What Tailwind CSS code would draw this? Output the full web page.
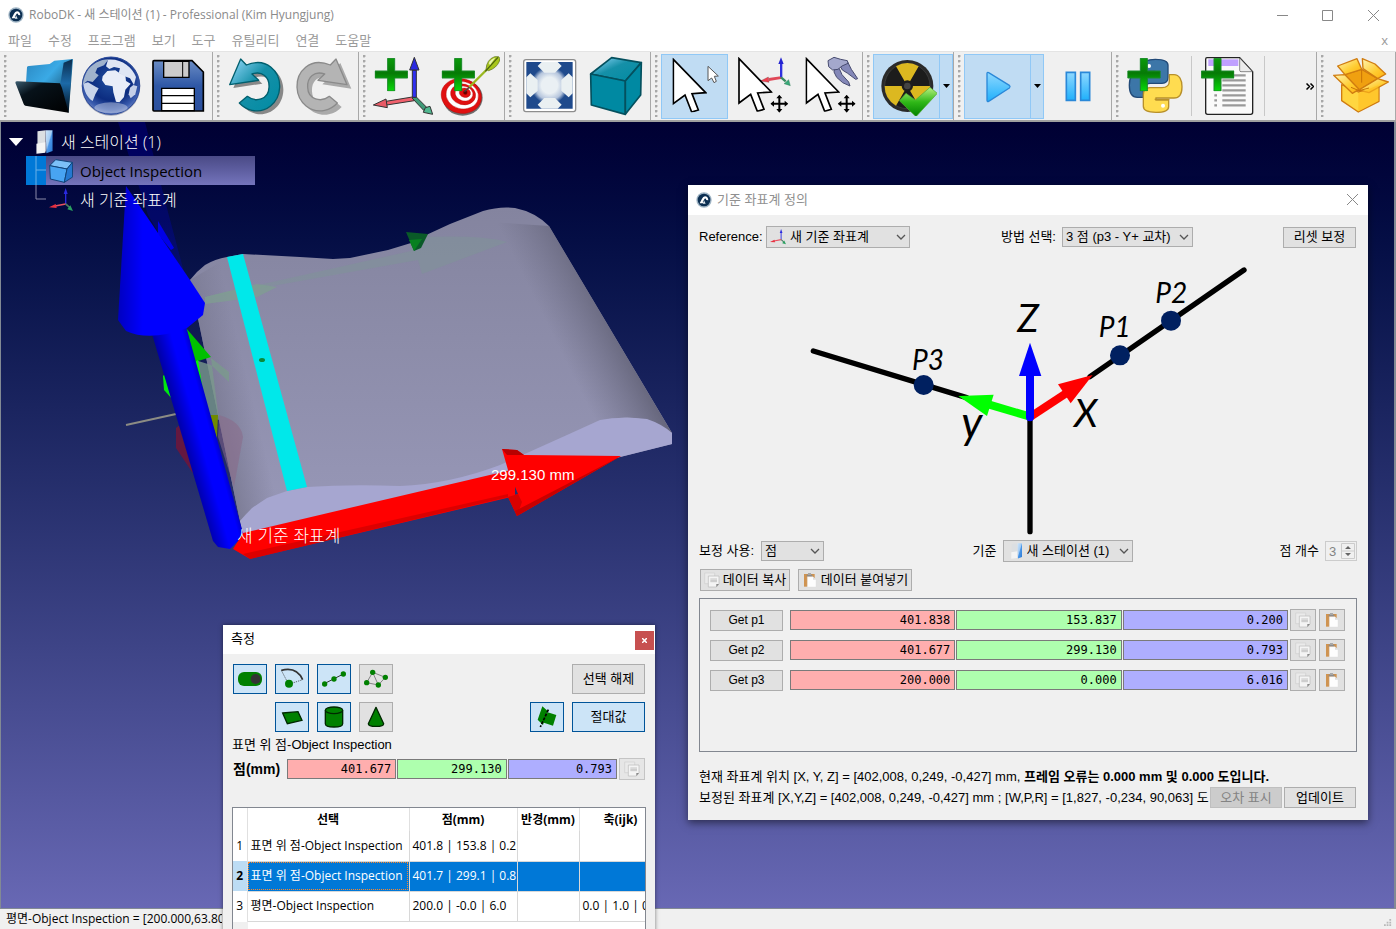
<!DOCTYPE html>
<html lang="ko">
<head>
    <meta charset="UTF-8">
    <meta name="viewport" content="width=device-width, initial-scale=1.0">
    <title>RoboDK</title>
    <script src="https://cdn.jsdelivr.net/npm/@tailwindcss/browser@4"></script>
    <style>
        body { font-family: "Open Sans", "Noto Sans CJK KR", sans-serif; }
        .gulim { font-family: "Liberation Sans", "Noto Sans CJK KR", sans-serif; }
        .mono { font-family: "DejaVu Sans Mono", monospace; }
        .grip { background: radial-gradient(circle at 1px 1px, #a8a8a8 1px, transparent 2px) 0 0 / 4px 5px; }
    </style>
</head>
<body class="h-screen overflow-hidden bg-[#f0f0f0] text-xs text-black">

<!-- shared symbols -->
<svg class="absolute size-0" aria-hidden="true">
    <defs>
        <linearGradient id="gPlus" x1="0" y1="0" x2="0" y2="1"><stop offset="0" stop-color="#0a9a0a"/><stop offset=".45" stop-color="#067a06"/><stop offset="1" stop-color="#08d808"/></linearGradient>
        <linearGradient id="gTeal" x1="0" y1="0" x2="1" y2="1"><stop offset="0" stop-color="#9adcff"/><stop offset=".45" stop-color="#1590a8"/><stop offset="1" stop-color="#008ba3"/></linearGradient>
        <linearGradient id="gBlue" x1="0" y1="0" x2="0" y2="1"><stop offset="0" stop-color="#8fd8ff"/><stop offset="1" stop-color="#1fb0fb"/></linearGradient>
        <linearGradient id="gDoor" x1="0" y1="0" x2="1" y2="1"><stop offset="0" stop-color="#d0e6fa"/><stop offset=".45" stop-color="#a4ccf4"/><stop offset=".55" stop-color="#4a96e8"/><stop offset="1" stop-color="#2a78d4"/></linearGradient>
    </defs>
    <symbol id="logo" viewBox="0 0 48 48">
        <circle cx="24" cy="24" r="23" fill="#9fb4c4"/><circle cx="24" cy="24" r="19" fill="#0c2f52"/>
        <path d="M11 34l7-14q3-6 9-7 9 0 10 12l-6-1q-1-5-5-4l-6 10 5 4z" fill="#fff"/><path d="M24 25l5 10h-8z" fill="#dfe8ee"/>
    </symbol>
    <symbol id="axes" viewBox="0 0 72 72">
        <path d="M50 48V14" stroke="#2a2ae0" stroke-width="4"/><path d="M50 0l6 18H44z" fill="#2a2ae0"/>
        <path d="M50 48L18 54" stroke="#e85060" stroke-width="5"/><path d="M0 58l20-10 3 12z" fill="#e83040"/>
        <path d="M50 48l12 10" stroke="#4a7a60" stroke-width="5"/><path d="M72 69l-17-5 9-12z" fill="#2aa060"/>
    </symbol>
    <symbol id="station" viewBox="0 0 50 70">
        <path d="M3 4l24-3v62L3 60z" fill="#dcdfe2"/><path d="M27 1h20v60l-18 7z" fill="url(#gDoor)"/><path d="M0 40l26-4v30l-26 3z" fill="#f4f4f4"/>
    </symbol>
    <symbol id="plus" viewBox="0 0 100 100"><path d="M39 1h21v38h39v21H60v39H39V60H1V39h38z" fill="url(#gPlus)" stroke="#1a8a2a" stroke-width="3"/></symbol>
    <symbol id="cursor" viewBox="0 0 104 164"><path d="M3 5l97 100-41 3 19 49-20 6-20-51-35 26z" fill="#fff" stroke="#000" stroke-width="5"/></symbol>
    <symbol id="move" viewBox="0 0 54 54"><path d="M27 0l9 11h-6v13h13v-6l11 9-11 9v-6H30v13h6l-9 11-9-11h6V30H11v6L0 27l11-9v6h13V11h-6z"/></symbol>
    <symbol id="copy" viewBox="0 0 48 48">
        <path d="M2 3h30v32H2z" fill="#eaeaea" stroke="#cfcfcf" stroke-width="2"/>
        <path d="M13 12h32v24l-8 9H13z" fill="#f4f4f4" stroke="#bababa" stroke-width="2"/>
        <path d="M19 21h20M19 25h20M19 29h20" stroke="#c6c6c6" stroke-width="3"/><path d="M45 36l-8 9v-9z" fill="#888"/>
    </symbol>
    <symbol id="paste" viewBox="0 0 48 48">
        <path d="M6 6h32v38H6z" fill="#cf9350"/><path d="M14 8h17v6H14z" fill="#8b8b8b"/><path d="M18 3h9v6h-9z" fill="#a8a8a8"/>
        <path d="M16 14h17l9 9v22H16z" fill="#fdfdfd" stroke="#ddd"/><path d="M33 14l9 9h-9z" fill="#ddd"/>
    </symbol>
    <symbol id="chev" viewBox="0 0 10 6"><path d="M1 1l4 4 4-4" fill="none" stroke="#555" stroke-width="1.3"/></symbol>
</svg>

<div class="flex h-screen flex-col">
    <header class="bg-white text-[#8a8a8a]">
        <div class="flex h-[30px] items-center pl-2">
            <svg class="size-4"><use href="#logo"/></svg>
            <h1 class="ml-[5px] flex-1">RoboDK - 새 스테이션 (1) - Professional (Kim Hyungjung)</h1>
            <button class="grid h-full w-[46px] place-items-center" aria-label="최소화"><svg class="size-[11px]" viewBox="0 0 11 11"><path d="M0 5.500h11" stroke="#888"/></svg></button>
            <button class="grid h-full w-[45px] place-items-center" aria-label="최대화"><svg class="size-[11px]" viewBox="0 0 11 11"><path d="M.5.5h10v10H.5z" fill="none" stroke="#888"/></svg></button>
            <button class="grid h-full w-[46px] place-items-center" aria-label="닫기"><svg class="size-[11px]" viewBox="0 0 11 11"><path d="M0 0l11 11M11 0L0 11" stroke="#888"/></svg></button>
        </div>
        <nav class="flex h-[21px] items-center gap-4 pr-2 pl-2 text-[13px] text-[#9a9a9a]">
            <a href="#">파일</a><a href="#">수정</a><a href="#">프로그램</a><a href="#">보기</a><a href="#">도구</a><a href="#">유틸리티</a><a href="#">연결</a><a href="#">도움말</a>
            <a href="#" class="ml-auto">x</a>
        </nav>
    </header>

    <!-- toolbar -->
    <div class="flex h-[71px] border-t border-b-2 border-t-[#e4e4e4] border-b-[#a0a0a0]" role="toolbar">
        <div class="flex items-center border-r border-[#a8a8a8] pr-px">
            <span class="grip ml-[4px] mr-[2px] h-[62px] w-1"></span>
            <button class="grid h-[65px] w-[67px] place-items-center" aria-label="열기">
                <svg class="size-[60px]" viewBox="39 168 180 180">
                    <defs><linearGradient id="gF" x1="0" y1="0" x2="1" y2="1"><stop offset="0" stop-color="#2a86c0"/><stop offset=".4" stop-color="#3aaae6"/><stop offset="1" stop-color="#021626"/></linearGradient>
                    <linearGradient id="gF2" x1="0" y1="0" x2="1" y2="1"><stop offset="0" stop-color="#3a5c70"/><stop offset=".3" stop-color="#07121a"/><stop offset="1" stop-color="#000"/></linearGradient>
                    <linearGradient id="gF3" x1="0" y1="0" x2="0" y2="1"><stop offset="0" stop-color="#0a2c4c"/><stop offset=".45" stop-color="#1c6aa8"/><stop offset="1" stop-color="#010a14"/></linearGradient></defs>
                    <path d="M78 202q1-4 6-4l62-6 14-10 56-5-13 161-130-60z" fill="url(#gF)"/>
                    <path d="M214 178l-12 160-24-86 10-64z" fill="url(#gF3)"/>
                    <path d="M43 248q0-4 6-4l128 6 6 14 20 74-130-21q-4-1-5-5z" fill="url(#gF2)"/>
                </svg>
            </button>
            <button class="grid h-[65px] w-[67px] place-items-center" aria-label="온라인 라이브러리">
                <svg class="size-[60px]" viewBox="241 167 180 180">
                    <defs><radialGradient id="gG" cx=".5" cy=".4" r=".65"><stop offset="0" stop-color="#2050a0"/><stop offset=".55" stop-color="#0c2c80"/><stop offset=".8" stop-color="#3a5cae"/><stop offset="1" stop-color="#8a9cd0"/></radialGradient></defs>
                    <circle cx="331" cy="258" r="88" fill="#9aa0b4"/><circle cx="331" cy="256" r="86" fill="url(#gG)" stroke="#2a4a9c" stroke-width="3"/>
                    <path d="M258 215c14-24 40-38 66-38l-14 18-20 8-6 14 10 8-18 20-16-4-14 12c2-14 6-26 12-38z" fill="#9fb2cc"/>
                    <path d="M248 250l14-4 24 14 8 4-10 18-8 20c-16-10-26-30-28-52z" fill="#c8d4ea"/>
                    <path d="M306 228l14-16 24-2 16 10 14 4 2 18 14 8-16 18-4 22-14 16-10-2-8-28-2-18-22-4-10-14z" fill="#e8edf8"/>
                    <path d="M322 178c40-4 72 22 84 52l-6 24-12-20-16-6-18-10 4-14-18-4-14 6-10-8z" fill="#dfe6f4"/>
                    <path d="M388 262l10-8 12 4-6 24-14 12-6-12z" fill="#c4cfe8"/><ellipse cx="331" cy="322" rx="50" ry="16" fill="#fff" opacity=".35"/>
                </svg>
            </button>
            <button class="grid h-[65px] w-[67px] place-items-center" aria-label="저장">
                <svg class="size-[60px]" viewBox="441 168 180 180">
                    <defs><linearGradient id="gS" x1="0" y1="0" x2="0" y2="1"><stop offset="0" stop-color="#6a8cc4"/><stop offset=".5" stop-color="#2f58a6"/><stop offset="1" stop-color="#2b4f9c"/></linearGradient></defs>
                    <path d="M459 182h114l34 34v117H459q-3 0-3-3V185q0-3 3-3z" fill="url(#gS)" stroke="#000" stroke-width="5"/>
                    <path d="M488 184h76v48h-76z" fill="#ccc" stroke="#000" stroke-width="4"/><path d="M545 186v45" stroke="#000" stroke-width="3"/>
                    <path d="M482 265h98v67h-98z" fill="#fff" stroke="#000" stroke-width="4"/><path d="M482 287h98M482 310h98" stroke="#000" stroke-width="4"/>
                </svg>
            </button>
        </div>
        <div class="flex items-center border-r border-[#a8a8a8] pr-px">
            <span class="grip ml-[4px] mr-[2px] h-[62px] w-1"></span>
            <button class="grid h-[65px] w-[67px] place-items-center" aria-label="실행 취소">
                <svg class="size-[60px]" viewBox="680 168 180 180">
                    <path d="M738 195C800 170 840 215 838 262C836 310 795 340 755 331C740 328 727 320 717 309L741 289C765 308 805 300 806 262C808 230 785 212 755 222L775 241L688 254L721 177Z" fill="#888" transform="translate(11 10)"/>
                    <path d="M738 195C800 170 840 215 838 262C836 310 795 340 755 331C740 328 727 320 717 309L741 289C765 308 805 300 806 262C808 230 785 212 755 222L775 241L688 254L721 177Z" fill="url(#gTeal)" stroke="#005f6e" stroke-width="4" stroke-linejoin="round"/>
                </svg>
            </button>
            <button class="grid h-[65px] w-[67px] place-items-center" aria-label="다시 실행">
                <svg class="size-[60px]" viewBox="879 168 180 180">
                    <path d="M988 195C926 170 886 215 888 262C890 310 931 340 971 331C986 328 999 320 1009 309L985 289C961 308 921 300 920 262C918 230 941 212 971 222L951 241L1038 254L1005 177Z" fill="#aaa" transform="translate(13 12)"/>
                    <path d="M988 195C926 170 886 215 888 262C890 310 931 340 971 331C986 328 999 320 1009 309L985 289C961 308 921 300 920 262C918 230 941 212 971 222L951 241L1038 254L1005 177Z" fill="#b4b4b4" stroke="#8a8a8a" stroke-width="4" stroke-linejoin="round"/>
                </svg>
            </button>
        </div>
        <div class="flex items-center border-r border-[#a8a8a8] pr-px">
            <span class="grip ml-[4px] mr-[2px] h-[62px] w-1"></span>
            <button class="grid h-[65px] w-[67px] place-items-center" aria-label="기준 좌표계 추가">
                <svg class="size-[60px]" viewBox="51 18 180 180">
                    <path d="M90 154l85-14v12l-83 13z" fill="#f0606c" stroke="#333" stroke-width="3"/><path d="M52 165l38-18 4 26z" fill="#e85a66" stroke="#333" stroke-width="3"/>
                    <path d="M168 144l12-4 34 34-10 8z" fill="#3f9a78" stroke="#333" stroke-width="3"/><path d="M230 193l-28-6 6-14 14-4z" fill="#50b890" stroke="#333" stroke-width="3"/>
                    <path d="M169 60h12v82h-12z" fill="#3030f0" stroke="#333" stroke-width="3"/><path d="M175 22l14 38h-28z" fill="#2a2ae0" stroke="#333" stroke-width="3"/>
                    <use href="#plus" x="56" y="24" width="100" height="100"/>
                </svg>
            </button>
            <button class="grid h-[65px] w-[67px] place-items-center" aria-label="타겟 추가">
                <svg class="size-[60px]" viewBox="252 18 180 180">
                    <ellipse cx="320" cy="143" rx="60" ry="54" fill="#6e6e6e"/>
                    <g transform="rotate(14 316 138)" stroke="#a00" stroke-width="1"><ellipse cx="316" cy="138" rx="61" ry="52" fill="#e01010"/><ellipse cx="318" cy="135" rx="49" ry="41" fill="#fff"/><ellipse cx="320" cy="132" rx="38" ry="31" fill="#e01010"/><ellipse cx="322" cy="129" rx="27" ry="22" fill="#fff"/><ellipse cx="324" cy="126" rx="17" ry="14" fill="#e01010"/><circle cx="325" cy="125" r="6" fill="#600"/></g>
                    <path d="M325 125l20-18" stroke="#444" stroke-width="4"/><path d="M340 111l60-60" stroke="#9ab820" stroke-width="7"/>
                    <path d="M390 58q2-30 26-38l12 0q6 4 2 14-8 20-32 28z" fill="#a8c61c" stroke="#566a10" stroke-width="2"/><path d="M388 64l38-42" stroke="#4a6010" stroke-width="4"/><path d="M398 40q6-14 20-17l-16 22z" fill="#e8f4b0"/>
                    <use href="#plus" x="257" y="24" width="100" height="100"/>
                </svg>
            </button>
        </div>
        <div class="flex items-center border-r border-[#a8a8a8] pr-px">
            <span class="grip ml-[4px] mr-[2px] h-[62px] w-1"></span>
            <button class="grid h-[65px] w-[67px] place-items-center" aria-label="전체 맞춤">
                <svg class="size-[60px]" viewBox="489 18 180 180">
                    <defs><radialGradient id="gC"><stop offset=".35" stop-color="#eaf0f4"/><stop offset=".62" stop-color="#b4c4dc"/><stop offset=".8" stop-color="#1f4a8c"/></radialGradient></defs>
                    <rect x="503" y="29" width="156" height="156" rx="7" fill="#fff" stroke="#8e8e8e" stroke-width="4"/><path d="M511 36h139v140H511z" fill="url(#gC)"/>
                    <path d="M545 48l12-12h48l12 12-20 20h-32zM545 164l12 12h48l12-12-20-20h-32zM523 70l-12 12v48l12 12 22-20V90zM638 70l12 12v48l-12 12-22-20V90z" fill="#eaf0f2"/>
                </svg>
            </button>
            <button class="grid h-[65px] w-[67px] place-items-center" aria-label="등각 보기">
                <svg class="size-[60px]" viewBox="689 18 180 180">
                    <g stroke="#04505e" stroke-width="5" stroke-linejoin="round"><path d="M766 23l89 15-48 55-104-21z" fill="url(#gTeal)"/><path d="M703 72l104 21v100l-102-28z" fill="#0089a2"/><path d="M807 93l48-55-2 97-46 58z" fill="#0089a2"/></g>
                </svg>
            </button>
        </div>
        <div class="flex items-center border-r border-[#a8a8a8]">
            <span class="grip ml-[4px] mr-[2px] h-[62px] w-1"></span>
            <button class="grid h-[65px] w-[67px] place-items-center border border-[#90c8f6] bg-[#c0dcf3]" aria-label="선택">
                <svg class="size-[60px]" viewBox="43 18 180 180"><use href="#cursor" x="65" y="23" width="104" height="164"/><path d="M172 49l31 29-12 1 6 15-7 4-7-14-11 8z" fill="#fff" stroke="#555" stroke-width="3"/></svg>
            </button>
            <button class="grid h-[65px] w-[67px] place-items-center" aria-label="좌표계 이동">
                <svg class="size-[60px]" viewBox="245 18 180 180">
                    <path d="M355 84l37-5v8l-36 6z" fill="#e04858"/><path d="M330 93l24-12 2 16z" fill="#f04050" stroke="#633"/><path d="M389 40h7v42h-7z" fill="#3030e0"/><path d="M392 22l8 20h-16z" fill="#2424d0"/><path d="M392 82l14 12" stroke="#3a8a60" stroke-width="7"/><path d="M420 107l-19-6 14-12z" fill="#38a878" stroke="#264"/>
                    <use href="#cursor" x="263" y="21" width="104" height="164"/><use href="#move" x="360" y="134" width="54" height="54"/>
                </svg>
            </button>
            <button class="grid h-[65px] w-[67px] place-items-center" aria-label="TCP 이동">
                <svg class="size-[60px]" viewBox="445 18 180 180">
                    <g fill="#8488b8" stroke="#484c70" stroke-width="3" stroke-linejoin="round"><path d="M552 54l14 2 8 18 20 22 4 12-22-10-18-16-8-16z"/><path d="M572 38l18-4 12 24 19 28-6 2-24-18-16-10-8-14z"/><path d="M532 32l18-10 20 6 20 4 2 8-18 8-12 10-16 2-12-10z" fill="#a4a8cc"/></g>
                    <use href="#cursor" x="464" y="21" width="104" height="164"/><use href="#move" x="561" y="134" width="54" height="54"/>
                </svg>
            </button>
        </div>
        <div class="flex items-center border-r border-[#a8a8a8]">
            <span class="grip ml-[4px] mr-[2px] h-[62px] w-1"></span>
            <button class="grid h-[65px] w-[67px] place-items-center border border-[#90c8f6] bg-[#c0dcf3]" aria-label="충돌 확인">
                <svg class="size-[60px]" viewBox="681 18 180 180">
                    <defs><linearGradient id="gK" x1="0" y1="0" x2="0" y2="1"><stop offset="0" stop-color="#b8f080"/><stop offset=".5" stop-color="#30b818"/><stop offset="1" stop-color="#008000"/></linearGradient></defs>
                    <circle cx="772" cy="108" r="78" fill="#2a2a2a"/><circle cx="772" cy="108" r="68" fill="#1c1c1c" stroke="#444" stroke-width="2"/>
                    <path d="M772 108L738 49a68 68 0 0 1 68 0zM772 108h68a68 68 0 0 1-34 59zM772 108h-68a68 68 0 0 0 34 59z" fill="#dcb820"/>
                    <circle cx="772" cy="108" r="17" fill="#1e1e1e"/><circle cx="772" cy="108" r="10" fill="#444"/>
                    <path d="M748 152l20-22 28 20 44-38 22 18-64 70z" fill="url(#gK)" stroke="#50a830" stroke-width="2"/>
                </svg>
            </button>
            <button class="grid h-[65px] w-[13px] place-items-center border border-l-0 border-[#90c8f6] bg-[#c0dcf3]" aria-label="충돌 옵션"><svg class="h-1 w-[7px]" viewBox="0 0 7 4"><path d="M0 0h7L3.500 4z"/></svg></button>
        </div>
        <div class="flex items-center border-r border-[#a8a8a8]">
            <span class="grip ml-[4px] mr-[2px] h-[62px] w-1"></span>
            <button class="grid h-[65px] w-[67px] place-items-center border border-[#90c8f6] bg-[#c0dcf3]" aria-label="재생">
                <svg class="size-[60px]" viewBox="956 18 180 180"><path d="M1013 70q0-4 5-2l62 38q4 4 0 8l-62 40q-5 2-5-3z" fill="url(#gBlue)" stroke="#2a88d8" stroke-width="4"/></svg>
            </button>
            <button class="grid h-[65px] w-[13px] place-items-center border border-l-0 border-[#90c8f6] bg-[#c0dcf3]" aria-label="재생 옵션"><svg class="h-1 w-[7px]" viewBox="0 0 7 4"><path d="M0 0h7L3.500 4z"/></svg></button>
            <button class="grid h-[65px] w-[67px] place-items-center" aria-label="일시 정지">
                <svg class="size-[60px]" viewBox="21 18 180 180"><path d="M76 67h27v84H76zM119 67h27v84h-27z" fill="url(#gBlue)" stroke="#2a88d8" stroke-width="5"/></svg>
            </button>
        </div>
        <div class="flex flex-1 items-center border-r border-[#a8a8a8]">
            <span class="grip ml-[4px] mr-[2px] h-[62px] w-1"></span>
            <button class="grid h-[65px] w-[67px] place-items-center" aria-label="Python 프로그램 추가">
                <svg class="size-[60px]" viewBox="258 18 180 180">
                    <path d="M346 28c28 0 38 6 38 18v36c0 12-6 18-18 18h-36c-12 0-20 8-20 20v22h-18c-16 0-24-14-24-36s8-36 24-36h52v-6h-34V48c0-14 10-20 36-20z" fill="#3c76a8" stroke="#224a78" stroke-width="4"/><circle cx="327" cy="48" r="6" fill="#fff"/>
                    <path d="M388 74h14c16 0 24 16 24 36s-8 34-24 34h-54v6h38v20c0 10-12 17-38 17s-38-7-38-18v-34c0-14 8-22 20-22h36c14 0 22-8 22-20z" fill="#ffdc50" stroke="#b8902a" stroke-width="4"/><path d="M344 148h44" stroke="#b8902a" stroke-width="4"/><circle cx="369" cy="167" r="6" fill="#fff"/>
                    <use href="#plus" x="262" y="24" width="100" height="100"/>
                </svg>
            </button>
            <span class="mr-[3px] ml-[2px] h-[60px] w-px bg-[#c8c8c8]"></span>
            <button class="grid h-[65px] w-[67px] place-items-center" aria-label="프로그램 추가">
                <svg class="size-[60px]" viewBox="476 18 180 180">
                    <path d="M500 23h98l39 42v122q0 6-6 6H502q-6 0-6-6V28q0-5 4-5z" fill="#fafafa" stroke="#222" stroke-width="4"/><path d="M598 24l38 41h-34q-4 0-4-4z" fill="#ececec" stroke="#555" stroke-width="2"/><path d="M504 28h90v20h-90z" fill="#c0a0ff"/>
                    <path d="M546 76h70M546 91h70M546 106h70M546 121h70M546 136h70M546 151h70M546 166h70" stroke="#999" stroke-width="7"/><path d="M522 136h8M522 151h8M522 166h8" stroke="#999" stroke-width="7"/>
                    <use href="#plus" x="482" y="24" width="100" height="100"/>
                </svg>
            </button>
            <span class="mr-[3px] ml-[2px] h-[60px] w-px bg-[#c8c8c8]"></span>
            <button class="ml-auto grid h-[65px] w-3 place-items-center" aria-label="더 보기"><svg class="h-[7px] w-2" viewBox="0 0 8 7"><path d="M.5.5l3 3-3 3M4.500.5l3 3-3 3" fill="none" stroke="#000" stroke-width="1.500"/></svg></button>
        </div>
        <div class="flex items-center border-r border-[#a8a8a8] pr-px">
            <span class="grip ml-[4px] mr-[2px] h-[62px] w-1"></span>
            <button class="grid h-[65px] w-[67px] place-items-center" aria-label="패키지">
                <svg class="size-[60px]" viewBox="870 18 180 180">
                    <defs><linearGradient id="gX" x1="0" y1="0" x2="1" y2="1"><stop offset="0" stop-color="#fff4b0"/><stop offset=".6" stop-color="#ffcc30"/><stop offset="1" stop-color="#ffae10"/></linearGradient></defs>
                    <g stroke="#d07c10" stroke-width="4" stroke-linejoin="round"><path d="M902 104l50 22 62-22v50l-62 32-50-34z" fill="#ffd640"/><path d="M910 74l52-16 48 28-56 34z" fill="#f0a010"/><path d="M890 48l58-22 14 32-50 16z" fill="url(#gX)"/><path d="M966 56l-2-30 38 16 32 30-24 14z" fill="url(#gX)"/><path d="M878 76l34-2 42 44-20 12z" fill="url(#gX)"/><path d="M954 120l56-34 32 10-58 32z" fill="url(#gX)"/></g>
                    <path d="M962 60v38M930 112l24 10 30-8" stroke="#c87408" stroke-width="3" fill="none"/><path d="M952 130l60-24v47l-60 31z" fill="#ffbc20" opacity=".6"/>
                </svg>
            </button>
        </div>
    </div>

    <!-- 3D view -->
    <main class="relative min-h-0 flex-1 border-r-2 border-l border-[#828a94] bg-linear-to-b from-[#000033] to-[#6868b4] text-white">
        <svg class="absolute top-0 left-0 h-[470px] w-[700px]" viewBox="1 122 700 470">
            <defs>
                <linearGradient id="gBody" x1="0" y1="0" x2="0" y2="1"><stop offset="0" stop-color="#84849f"/><stop offset="1" stop-color="#9898b8"/></linearGradient>
                <linearGradient id="gEdge" gradientUnits="userSpaceOnUse" x1="560" y1="350" x2="616" y2="322"><stop offset="0" stop-color="#707088" stop-opacity="0"/><stop offset="1" stop-color="#66667c"/></linearGradient>
                <linearGradient id="gShaft" gradientUnits="userSpaceOnUse" x1="180" y1="436" x2="216" y2="426"><stop offset="0" stop-color="#0000a0"/><stop offset=".5" stop-color="#0000ff"/><stop offset=".8" stop-color="#0000ff"/><stop offset="1" stop-color="#0000b8"/></linearGradient>
                <linearGradient id="gCone" gradientUnits="userSpaceOnUse" x1="118" y1="290" x2="200" y2="290"><stop offset="0" stop-color="#0000c0"/><stop offset=".3" stop-color="#0000ff"/></linearGradient>
                <linearGradient id="gLeft" gradientUnits="userSpaceOnUse" x1="200" y1="400" x2="250" y2="388"><stop offset="0" stop-color="#77778f"/><stop offset="1" stop-color="#77778f" stop-opacity="0"/></linearGradient>
            </defs>
            <path d="M118 122h27l23 90 16 60-14-20-22-37z" fill="#0000ff" opacity=".2"/>
            <path d="M158 221l16 27-3 2-13-16z" fill="#0000e8"/>
            <path d="M126 425l50-11" stroke="#8c8c84" stroke-width="2"/>
            <path d="M176 428l10-8 14 60-8-8-16-24z" fill="#641840"/>
            <path d="M190 280Q197 271 205 265 215 259 227 257L243 254 263 255 300 257 333 259 350 258 388 250 411 243 424 236 450 224 483 211Q500 206 515 208 535 212 549 226L672 433V444L620 457 243 534 240 521z" fill="url(#gBody)"/>
            <path d="M490 222l59 4 123 207q-20-14-45-16-27 2-60 18z" fill="url(#gEdge)"/>
            <path d="M190 280l37-22 60 233q-30 8-47 30z" fill="url(#gLeft)"/>
            <path d="M205 297l206-46v-10l12-4q60-2 84 5l-85 32-4-14-213 38z" fill="#7a9c92" opacity=".35"/>
            <path d="M205 297l52-13 20 3-20 10-52 7z" fill="#7f9f90" opacity=".7"/>
            <path d="M406 232l22 2-7 14-7 3z" fill="#0a5a28"/><path d="M409 240l13-1-8 12z" fill="#088020"/>
            <path d="M195 360l16 5 18 17v-10l-18-14 8 62-12-4z" fill="#7a9a8c" opacity=".8"/>
            <path d="M186 328l25 29-16 5z" fill="#00c000"/><path d="M195 362l3-2 6 36z" fill="#00ff00"/><path d="M163 376l2-2 8 26-9-10z" fill="#00e810"/>
            <path d="M219 415q22 6 24 22l-9 50-16-50z" fill="#8a6a88" opacity=".55"/><path d="M209 415h9l-1 24z" fill="#6f8a00"/>
            <path d="M240 521L252 508 267 498 287 491 307 487Q350 484 400 486 450 484 500 465L567 435 600 420Q620 416 647 419 662 424 672 433V444L620 457 243 534z" fill="#a6a6d0"/>
            <path d="M227 257l16-3 64 233-20 4z" fill="#00e8ea"/><ellipse cx="262" cy="360" rx="3" ry="2" fill="#0a8a3a"/>
            <path d="M243 533L515 469V496L250 559 233 549z" fill="#f00"/><path d="M243 554l265-60v3L250 559z" fill="#c40000" opacity=".6"/>
            <path d="M502 449l15 1 7 5 97 1-104 60-9-19 10-3-10-24z" fill="#f00"/><path d="M508 497l10-3 4 8-5 14z" fill="#d80000"/><path d="M502 449l15 1 7 5-17 0z" fill="#b80000"/><path d="M621 456l-104 60-2-5z" fill="#c80000"/>
            <path d="M152 334l34-8 57 207-5 8-8 8-12-2-5-6z" fill="url(#gShaft)"/>
            <path d="M126 186L190 280 205 303 203 315 187 328Q150 342 126 331L118 320z" fill="url(#gCone)"/>
            <g fill="#fff" font-weight="300"><text x="237" y="542" font-size="17" font-family="'Noto Sans CJK KR', sans-serif">새 기준 좌표계</text><text x="491" y="480" font-size="15" font-family="'Liberation Sans', sans-serif">299.130 mm</text></g>
        </svg>

        <ul class="relative w-[254px] pt-[5px] text-[15px]">
            <li class="flex h-[29px] items-center pl-[7px]"><svg class="h-2 w-4" viewBox="0 0 16 9"><path d="M0 0h16L8 9z" fill="#fff"/></svg><svg class="ml-3 h-6 w-[18px]"><use href="#station"/></svg><span class="ml-[7px] text-base font-light">새 스테이션 (1)</span></li>
            <li class="flex h-[29px] items-center pl-[25px] text-black">
                <div class="flex h-full flex-1 items-center bg-linear-to-b from-[#4a4a86] to-[#7474bc]">
                    <svg class="h-full w-5 bg-[#0078d7]" viewBox="0 0 20 29"><path d="M10 0v29M10 14h10" stroke="#6ab0e8"/></svg>
                    <svg class="ml-[3px] size-6" viewBox="0 0 72 72"><g stroke="#12457a" stroke-width="3" stroke-linejoin="round"><path d="M20 2l50 8-16 20L2 20z" fill="#7cc0f8"/><path d="M2 20l52 10-8 40-42-10z" fill="#48a4f2"/><path d="M54 30l16-20 1 44-25 16z" fill="#2478d0"/></g></svg>
                    <span class="ml-[7px]">Object Inspection</span>
                </div>
            </li>
            <li class="flex h-[29px] items-center pl-[25px]"><svg class="h-full w-5" viewBox="0 0 20 29"><path d="M10 0v14h10" fill="none" stroke="#8a8aa8"/></svg><svg class="ml-[3px] size-6"><use href="#axes"/></svg><span class="ml-[7px] text-base font-light">새 기준 좌표계</span></li>
        </ul>

        <!-- reference frame dialog -->
        <section class="gulim absolute top-[63px] right-[26px] w-[680px] bg-[#f0f0f0] text-[13px] text-black shadow-[0_3px_8px_rgba(0,0,0,.5)]">
            <div class="flex h-[30px] items-center bg-white pr-[10px] pb-px pl-2 text-[#909090]">
                <svg class="size-4"><use href="#logo"/></svg><h2 class="ml-[5px] flex-1">기준 좌표계 정의</h2>
                <button aria-label="닫기"><svg class="size-[11px]" viewBox="0 0 11 11"><path d="M0 0l11 11M11 0L0 11" stroke="#888"/></svg></button>
            </div>
            <div class="px-[11px] pt-[11px] pb-3">
                <div class="flex h-[22px] items-center">
                    <label for="ref" class="w-[67px]">Reference:</label>
                    <div class="relative h-[22px] w-[144px]"><svg class="absolute top-[3px] left-1 size-4"><use href="#axes"/></svg>
                        <select id="ref" class="h-full w-full appearance-none border border-[#adadad] bg-[#d2d2d2]/50 pl-[23px]"><option>새 기준 좌표계</option></select><svg class="pointer-events-none absolute top-2 right-1 h-[6px] w-[10px]"><use href="#chev"/></svg></div>
                    <label for="method" class="ml-auto">방법 선택:</label>
                    <div class="relative ml-[6px] h-[20px] w-[131px]"><select id="method" class="h-full w-full appearance-none border border-[#adadad] bg-[#e1e1e1] pl-[3px]"><option>3 점 (p3 - Y+ 교차)</option></select><svg class="pointer-events-none absolute top-[7px] right-1 h-[6px] w-[10px]"><use href="#chev"/></svg></div>
                    <button class="mr-px ml-[90px] h-[21px] w-[73px] border border-[#adadad] bg-[#e1e1e1]">리셋 보정</button>
                </div>
                <svg class="mx-auto mt-[2px] h-[290px] w-[480px]" viewBox="-6 -15 1440 870">
                    <g stroke="#000" stroke-width="16" stroke-linecap="round"><path d="M70 288l460 140M900 365l462-320M720 490v340"/></g>
                    <path d="M720 485L598 449" stroke="#0f0" stroke-width="24"/><path d="M505 423l106-4-20 64z" fill="#0f0"/>
                    <path d="M722 485l106-70" stroke="#f00" stroke-width="24"/><path d="M908 360l-104 28 38 57z" fill="#f00"/>
                    <path d="M720 487V360" stroke="#00f" stroke-width="24" stroke-linecap="round"/><path d="M720 263l34 100h-67z" fill="#00f"/>
                    <g fill="#002060"><circle cx="1143" cy="197" r="30"/><circle cx="990" cy="301" r="30"/><circle cx="401" cy="390" r="30"/></g>
                    <g font-family="Lato, sans-serif" font-style="italic" font-size="84"><text x="1096" y="145">P2</text><text x="926" y="246">P1</text><text x="366" y="344">P3</text></g>
                    <g font-family="Lato, sans-serif" font-style="italic" font-size="116"><text x="682" y="232">Z</text><text x="852" y="516">X</text><text x="514" y="548" font-size="132">y</text></g>
                </svg>
                <div class="flex h-[22px] items-center">
                    <label for="use" class="w-[62px] whitespace-nowrap">보정 사용:</label>
                    <div class="relative h-[20px] w-[63px]"><select id="use" class="h-full w-full appearance-none border border-[#adadad] bg-[#e1e1e1] pl-[3px]"><option>점</option></select><svg class="pointer-events-none absolute top-[7px] right-1 h-[6px] w-[10px]"><use href="#chev"/></svg></div>
                    <label for="base" class="ml-auto">기준</label>
                    <div class="relative ml-[6px] h-[22px] w-[130px]"><svg class="absolute top-[3px] left-[8px] h-4 w-3"><use href="#station"/></svg>
                        <select id="base" class="h-full w-full appearance-none border border-[#adadad] bg-[#d2d2d2]/50 pl-[23px]"><option>새 스테이션 (1)</option></select><svg class="pointer-events-none absolute top-2 right-1 h-[6px] w-[10px]"><use href="#chev"/></svg></div>
                    <label for="cnt" class="ml-[147px]">점 개수</label>
                    <div class="relative ml-[6px] h-[20px] w-8"><input id="cnt" disabled value="3" class="h-full w-full border border-[#ccc] pl-[3px] text-[#838383]"><svg class="absolute top-[2px] right-[2px] h-4 w-[14px]" viewBox="0 0 14 16"><path d="M.5.5h13v15H.5zM0 8h14" fill="none" stroke="#ccc"/><path d="M4 6l3-3 3 3zM4 10l3 3 3-3z" fill="#666"/></svg></div>
                </div>
                <div class="mt-[7px] flex gap-2 pl-px">
                    <button class="flex h-[22px] w-[90px] items-center justify-center gap-[3px] border border-[#adadad] bg-[#e1e1e1] whitespace-nowrap"><svg class="size-4 shrink-0"><use href="#copy"/></svg>데이터 복사</button>
                    <button class="flex h-[22px] w-[114px] items-center justify-center gap-[3px] border border-[#adadad] bg-[#e1e1e1] whitespace-nowrap"><svg class="size-4 shrink-0"><use href="#paste"/></svg>데이터 붙여넣기</button>
                </div>
                <div class="mt-[7px] flex h-[154px] flex-col gap-2 border border-[#828790] py-[10px] pr-[11px] pl-[10px] text-xs">
                    <div class="flex items-center"><button class="mr-[7px] h-[21px] w-[73px] border border-[#adadad] bg-[#e1e1e1]">Get p1</button>
                        <div class="mono grid flex-1 grid-cols-3 gap-px"><input aria-label="p1 X" value="401.838" class="h-5 min-w-0 border border-[#7a7a7a] bg-[#ffaeae] pr-1 text-right"><input aria-label="p1 Y" value="153.837" class="h-5 min-w-0 border border-[#7a7a7a] bg-[#aeffae] pr-1 text-right"><input aria-label="p1 Z" value="0.200" class="h-5 min-w-0 border border-[#7a7a7a] bg-[#aeaeff] pr-1 text-right"></div>
                        <button aria-label="복사" class="ml-[2px] grid h-[22px] w-[26px] place-items-center border border-[#adadad] bg-[#e1e1e1]"><svg class="size-4"><use href="#copy"/></svg></button><button aria-label="붙여넣기" class="ml-[3px] grid h-[22px] w-[26px] place-items-center border border-[#adadad] bg-[#e1e1e1]"><svg class="size-4"><use href="#paste"/></svg></button></div>
                    <div class="flex items-center"><button class="mr-[7px] h-[21px] w-[73px] border border-[#adadad] bg-[#e1e1e1]">Get p2</button>
                        <div class="mono grid flex-1 grid-cols-3 gap-px"><input aria-label="p2 X" value="401.677" class="h-5 min-w-0 border border-[#7a7a7a] bg-[#ffaeae] pr-1 text-right"><input aria-label="p2 Y" value="299.130" class="h-5 min-w-0 border border-[#7a7a7a] bg-[#aeffae] pr-1 text-right"><input aria-label="p2 Z" value="0.793" class="h-5 min-w-0 border border-[#7a7a7a] bg-[#aeaeff] pr-1 text-right"></div>
                        <button aria-label="복사" class="ml-[2px] grid h-[22px] w-[26px] place-items-center border border-[#adadad] bg-[#e1e1e1]"><svg class="size-4"><use href="#copy"/></svg></button><button aria-label="붙여넣기" class="ml-[3px] grid h-[22px] w-[26px] place-items-center border border-[#adadad] bg-[#e1e1e1]"><svg class="size-4"><use href="#paste"/></svg></button></div>
                    <div class="flex items-center"><button class="mr-[7px] h-[21px] w-[73px] border border-[#adadad] bg-[#e1e1e1]">Get p3</button>
                        <div class="mono grid flex-1 grid-cols-3 gap-px"><input aria-label="p3 X" value="200.000" class="h-5 min-w-0 border border-[#7a7a7a] bg-[#ffaeae] pr-1 text-right"><input aria-label="p3 Y" value="0.000" class="h-5 min-w-0 border border-[#7a7a7a] bg-[#aeffae] pr-1 text-right"><input aria-label="p3 Z" value="6.016" class="h-5 min-w-0 border border-[#7a7a7a] bg-[#aeaeff] pr-1 text-right"></div>
                        <button aria-label="복사" class="ml-[2px] grid h-[22px] w-[26px] place-items-center border border-[#adadad] bg-[#e1e1e1]"><svg class="size-4"><use href="#copy"/></svg></button><button aria-label="붙여넣기" class="ml-[3px] grid h-[22px] w-[26px] place-items-center border border-[#adadad] bg-[#e1e1e1]"><svg class="size-4"><use href="#paste"/></svg></button></div>
                </div>
                <p class="mt-4 leading-[18px] whitespace-nowrap">현재 좌표계 위치 [X, Y, Z] = [402,008, 0,249, -0,427] mm, <b>프레임 오류는 0.000 mm 및 0.000 도입니다.</b></p>
                <div class="flex items-center gap-[2px] pt-px whitespace-nowrap"><p class="min-w-0 flex-1">보정된 좌표계 [X,Y,Z] = [402,008, 0,249, -0,427] mm ; [W,P,R] = [1,827, -0,234, 90,063] 도</p>
                    <button disabled class="h-[21px] w-[72px] border border-[#bfbfbf] bg-[#ccc] text-[#838383]">오차 표시</button><button class="mr-px h-[21px] w-[72px] border border-[#adadad] bg-[#e1e1e1]">업데이트</button></div>
            </div>
        </section>

        <!-- measure window -->
        <section class="gulim absolute top-[503px] left-[222px] z-10 w-[432px] bg-[#f0f0f0] text-[13px] text-black shadow-[0_0_4px_rgba(0,0,0,.5)]">
            <div class="flex h-[29px] items-center bg-white pr-px pl-2"><h2 class="flex-1 pb-[2px]">측정</h2><button aria-label="닫기" class="mt-[2px] grid size-[19px] place-items-center bg-[#c75050]"><svg class="size-[5px]" viewBox="0 0 5 5"><path d="M0 0l5 5M5 0L0 5" stroke="#fff" stroke-width="1.500"/></svg></button></div>
            <div class="px-[10px] pt-[10px]">
                <div class="grid grid-cols-[34px_34px_34px_34px_1fr_34px_73px] gap-2">
                    <button aria-label="측정 켜기" class="grid h-[30px] place-items-center border border-[#005499] bg-[#cce4f7]"><svg class="h-[14px] w-6" viewBox="0 0 72 42"><rect width="72" height="42" rx="18" fill="#008000"/><circle cx="53" cy="21" r="15" fill="#333"/></svg></button>
                    <button aria-label="반경" class="grid h-[30px] place-items-center border border-[#005499] bg-[#cce4f7]"><svg class="size-6" viewBox="0 0 72 72"><path d="M4 10Q50-2 68 38" fill="none" stroke="#333" stroke-width="5"/><path d="M4 10l22 42 42-14" fill="none" stroke="#222" stroke-width="2" stroke-dasharray="4 3"/><circle cx="27" cy="50" r="12" fill="#008000"/></svg></button>
                    <button aria-label="거리" class="grid h-[30px] place-items-center border border-[#005499] bg-[#cce4f7]"><svg class="size-6" viewBox="0 0 72 72"><path d="M7 50L64 21" stroke="#333" stroke-width="3"/><g fill="#008000"><circle cx="8" cy="51" r="8"/><circle cx="36" cy="36" r="8"/><circle cx="64" cy="21" r="8"/></g></svg></button>
                    <button aria-label="점군" class="grid h-[30px] place-items-center border border-[#adadad] bg-[#e1e1e1]"><svg class="size-6" viewBox="0 0 72 72"><path d="M8 47L26 16 64 31 43 54zM26 16l17 38" fill="none" stroke="#555" stroke-width="2"/><g fill="#008000"><circle cx="8" cy="47" r="8"/><circle cx="26" cy="16" r="8"/><circle cx="64" cy="31" r="8"/><circle cx="43" cy="54" r="8"/></g></svg></button>
                    <button class="col-start-7 h-[30px] border border-[#adadad] bg-[#e1e1e1]">선택 해제</button>
                    <button aria-label="평면" class="col-start-2 grid h-[30px] place-items-center border border-[#005499] bg-[#cce4f7]"><svg class="size-6" viewBox="0 0 72 72"><path d="M8 24l46-4 12 26-44 10z" fill="#008000" stroke="#002800" stroke-width="4"/></svg></button>
                    <button aria-label="원통" class="grid h-[30px] place-items-center border border-[#005499] bg-[#cce4f7]"><svg class="size-6" viewBox="0 0 72 72"><path d="M10 16v40q0 10 26 10t26-10V16" fill="#008000" stroke="#002800" stroke-width="4"/><ellipse cx="36" cy="16" rx="26" ry="10" fill="#008000" stroke="#002800" stroke-width="4"/></svg></button>
                    <button aria-label="원뿔" class="grid h-[30px] place-items-center border border-[#adadad] bg-[#e1e1e1]"><svg class="size-6" viewBox="0 0 72 72"><path d="M36 7L13 56q0 8 23 8t23-8z" fill="#008000" stroke="#002800" stroke-width="4" stroke-linejoin="round"/></svg></button>
                    <button aria-label="상대 평면" class="col-start-6 grid h-[30px] place-items-center border border-[#005499] bg-[#cce4f7]"><svg class="size-6" viewBox="0 0 72 72"><path d="M22 4l16 14-14 42L8 44zM38 22l26 8-10 32-32-10z" fill="#008000"/><path d="M40 14L16 66" stroke="#000" stroke-width="5" stroke-dasharray="9 4"/></svg></button>
                    <button class="h-[30px] border border-[#005499] bg-[#cce4f7]">절대값</button>
                </div>
                <p class="mt-1 -ml-px leading-[18px]">표면 위 점-Object Inspection</p>
                <div class="mt-[4px] flex h-[22px] items-center"><b class="w-[54px] text-sm">점(mm)</b>
                    <div class="mono grid flex-1 grid-cols-3 gap-px text-xs"><input aria-label="X" value="401.677" class="h-5 min-w-0 border border-[#7a7a7a] bg-[#ffaeae] pr-1 text-right"><input aria-label="Y" value="299.130" class="h-5 min-w-0 border border-[#7a7a7a] bg-[#aeffae] pr-1 text-right"><input aria-label="Z" value="0.793" class="h-5 min-w-0 border border-[#7a7a7a] bg-[#aeaeff] pr-1 text-right"></div>
                    <button aria-label="복사" class="ml-[2px] grid h-[22px] w-[26px] place-items-center border border-[#c4c4c4] bg-[#e6e6e6]"><svg class="size-4"><use href="#copy"/></svg></button></div>
                <div class="-mx-px mt-[27px] h-[160px] overflow-hidden border border-[#828790] bg-white">
                    <table class="w-[520px] table-fixed border-collapse text-xs whitespace-nowrap" style="font-family: 'Open Sans', 'Noto Sans CJK KR', sans-serif">
                        <colgroup><col class="w-[14px]"><col class="w-[162px]"><col class="w-[108px]"><col class="w-[62px]"><col></colgroup>
                        <thead><tr class="h-[23px] font-bold"><th class="border-r border-[#e0e0e0]"></th><th class="border-r border-[#e0e0e0]">선택</th><th class="border-r border-[#e0e0e0]">점(mm)</th><th class="border-r border-[#e0e0e0]">반경(mm)</th><th class="pl-6 text-left">축(ijk)</th></tr></thead>
                        <tbody class="[&_td]:border-r [&_td]:border-b [&_td]:border-[#d8d8d8] [&_td]:pl-[3px]">
                            <tr class="h-[30px]"><th class="border-r border-[#e0e0e0] font-normal">1</th><td>표면 위 점-Object Inspection</td><td>401.8 | 153.8 | 0.2</td><td></td><td></td></tr>
                            <tr class="h-[30px] bg-[#0078d7] text-white"><th class="border-r border-[#e0e0e0] bg-[#bcdcf4] text-black">2</th><td class="outline-1 -outline-offset-2 outline-dotted outline-[#ff8728]">표면 위 점-Object Inspection</td><td>401.7 | 299.1 | 0.8</td><td></td><td></td></tr>
                            <tr class="h-[30px]"><th class="border-r border-[#e0e0e0] font-normal">3</th><td>평면-Object Inspection</td><td>200.0 | -0.0 | 6.0</td><td></td><td>0.0 | 1.0 | 0.0</td></tr>
                        </tbody>
                    </table>
                    <div class="h-12 w-[15px] bg-[#f0f0f0]"></div>
                </div>
            </div>
        </section>
    </main>

    <footer class="flex h-[21px] items-center border-t border-[#828a94] pr-1 pl-[6px]">
        <span class="w-[216px] overflow-hidden whitespace-nowrap">평면-Object Inspection = [200.000,63.800</span>
        <svg class="mt-2 ml-auto size-2" viewBox="0 0 9 9"><path d="M6 0h2v2H6zM3 3h2v2H3zM6 3h2v2H6zM0 6h2v2H0zM3 6h2v2H3zM6 6h2v2H6z" fill="#b8b8b8"/></svg>
    </footer>
</div>
</body>
</html>
